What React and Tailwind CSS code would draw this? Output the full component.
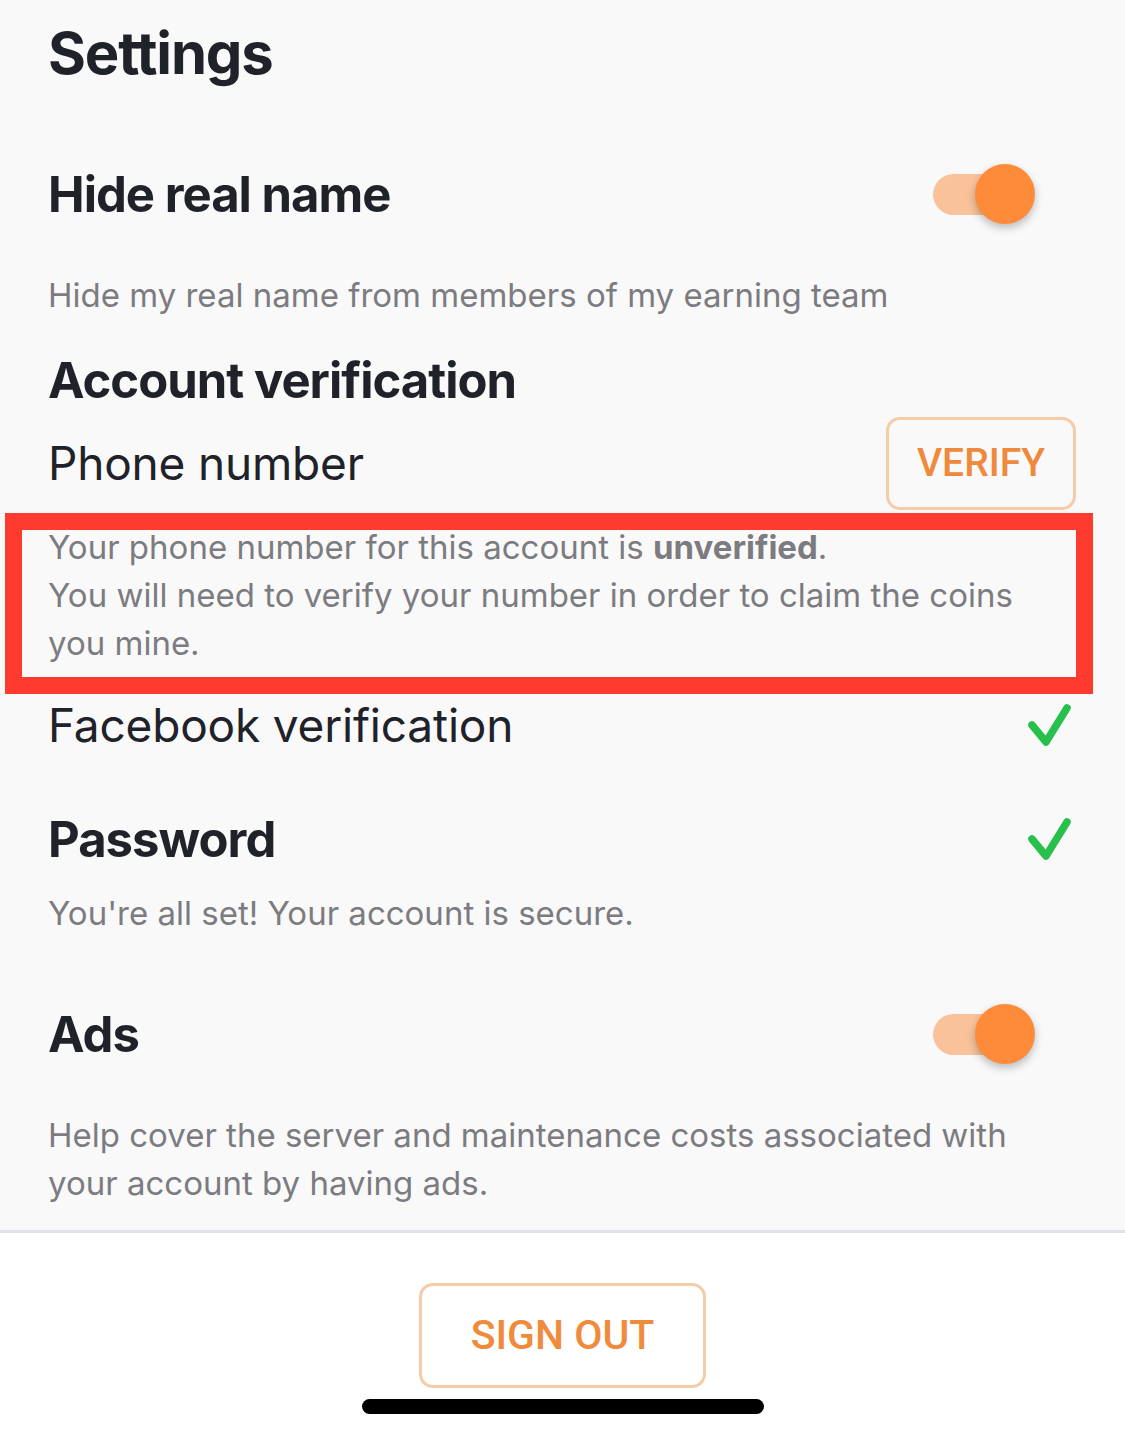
const heading = "text-[49px] font-bold leading-none tracking-[-0.02em] text-[#1f2229]";
const body = "text-[33px] leading-[48px] tracking-normal text-[#7c7c80]";
const label = "text-[46px] leading-none tracking-[-0.004em] text-[#1f2229]";

function Toggle() {
  return (
    <div className="relative mr-[41px] h-[60px] w-[102px]">
      <div className="absolute left-0 top-[10px] h-[41px] w-[87px] rounded-full bg-[#f9c29b]" />
      <div className="absolute right-0 top-0 h-[60px] w-[60px] rounded-full bg-[#fe8b3a] shadow-[0_4px_8px_rgba(0,0,0,0.25)]" />
    </div>
  );
}

function GreenCheck() {
  return (
    <svg width="48" height="44" viewBox="0 0 48 44" className="mr-[2px]">
      <polyline
        points="6,22 20,39 41,5"
        fill="none"
        stroke="#27c04a"
        strokeWidth="7.5"
        strokeLinecap="round"
        strokeLinejoin="round"
      />
    </svg>
  );
}

export default function App() {
  return (
    <div className="min-h-[1438px] bg-white font-['Inter',sans-serif]">
      {/* Settings list */}
      <section className="border-b-[3px] border-[#e2e2e8] bg-[#f9f9fa] pb-[23px] pl-[48px] pr-[49px]">
        <div className="flex h-[106px] items-center">
          <h1 className="text-[58px] font-bold leading-none tracking-[-0.02em] text-[#1f2229]">
            Settings
          </h1>
        </div>

        <div className="mt-[44px] flex h-[88px] items-center justify-between">
          <h2 className={heading}>Hide real name</h2>
          <Toggle />
        </div>
        <p className={`mt-[33px] ${body}`}>
          Hide my real name from members of my earning team
        </p>

        <div className="mt-[31px] flex h-[60px] items-center">
          <h2 className={heading}>Account verification</h2>
        </div>

        <div className="mt-[6px] flex h-[94px] items-center justify-between">
          <span className={label}>Phone number</span>
          <button className="flex h-[93px] w-[190px] items-center justify-center rounded-[14px] border-[3px] border-[#f5cba8] font-['Roboto',sans-serif] text-[39px] font-medium text-[#ef8a3c]">
            VERIFY
          </button>
        </div>

        <div className="relative mt-[13px]">
          <p className={body}>
            Your phone number for this account is{" "}
            <span className="font-bold">unverified</span>.
            <br />
            You will need to verify your number in order to claim the coins
            you mine.
          </p>
          {/* annotation box */}
          <div className="pointer-events-none absolute -bottom-[27px] -left-[43px] -right-[17px] -top-[10px] border-[17px] border-[#ff3b30]" />
        </div>

        <div className="mt-[28px] flex h-[60px] items-center justify-between">
          <span className={label}>Facebook verification</span>
          <GreenCheck />
        </div>

        <div className="mt-[54px] flex h-[60px] items-center justify-between">
          <h2 className={heading}>Password</h2>
          <GreenCheck />
        </div>
        <p className={`mt-[20px] ${body}`}>
          You're all set! Your account is secure.
        </p>

        <div className="mt-[65px] flex h-[64px] items-center justify-between">
          <h2 className={heading}>Ads</h2>
          <Toggle />
        </div>
        <p className={`mt-[45px] ${body}`}>
          Help cover the server and maintenance costs associated with your
          account by having ads.
        </p>
      </section>

      {/* Footer */}
      <div className="flex flex-col items-center bg-white">
        <button className="mt-[50px] flex h-[105px] w-[287px] items-center justify-center rounded-[14px] border-[3px] border-[#f5cba8] font-['Roboto',sans-serif] text-[41px] font-medium text-[#f08b3c]">
          SIGN OUT
        </button>
        <div className="mt-[11px] h-[15px] w-[402px] rounded-full bg-black" />
      </div>
    </div>
  );
}
